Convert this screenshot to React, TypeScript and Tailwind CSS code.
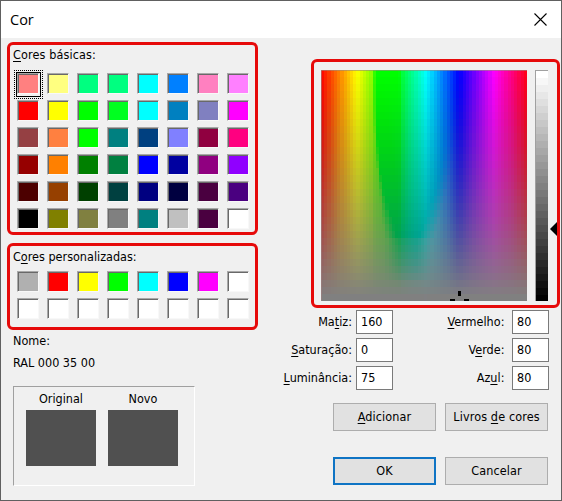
import type { ReactNode } from "react";

const BASIC_COLORS = [
  ["#ff8080", "#ffff80", "#00ff80", "#00ff80", "#00ffff", "#0080ff", "#ff80c0", "#ff80ff"],
  ["#ff0000", "#ffff00", "#00ff00", "#00ff20", "#00ffff", "#0080c0", "#8080c0", "#ff00ff"],
  ["#954043", "#ff8040", "#00ff00", "#008080", "#004080", "#8080ff", "#900040", "#ff0080"],
  ["#960000", "#ff8000", "#008000", "#008040", "#0000ff", "#0000a0", "#900080", "#9000ff"],
  ["#4c0000", "#964000", "#004000", "#004040", "#000080", "#000040", "#4a0040", "#4a0080"],
  ["#000000", "#808000", "#808040", "#808080", "#008080", "#c0c0c0", "#4a0040", "#ffffff"],
];

const CUSTOM_COLORS = [
  ["#b0b0b0", "#ff0000", "#ffff00", "#00ff00", "#00ffff", "#0000ff", "#ff00ff", "#ffffff"],
  ["#ffffff", "#ffffff", "#ffffff", "#ffffff", "#ffffff", "#ffffff", "#ffffff", "#ffffff"],
];

// position along the hue axis -> r, g, b at full saturation
const HUE_STOPS = [
  [0, 255, 0, 0],
  [0.175, 255, 255, 0],
  [0.25, 128, 255, 0],
  [0.26, 90, 255, 0],
  [0.38, 0, 255, 0],
  [0.4, 0, 255, 70],
  [0.51, 0, 255, 255],
  [0.67, 0, 0, 255],
  [0.84, 255, 0, 255],
  [1, 255, 0, 20],
];

const COLS = 64;
const ROWS = 33;

const clamp = (v: number) => Math.max(0, Math.min(1, v));

function hueAt(x: number) {
  let i = 1;
  while (i < HUE_STOPS.length - 1 && HUE_STOPS[i][0] < x) i++;
  const a = HUE_STOPS[i - 1];
  const b = HUE_STOPS[i];
  const t = (x - a[0]) / (b[0] - a[0]);
  return [1, 2, 3].map((c) => a[c] + (b[c] - a[c]) * t);
}

function spectrumColor(x: number, y: number) {
  const slow = Math.pow(y, 1.6);
  const hue = hueAt(x);
  let [r, g, b] = hue.map((c) => c + (128 - c) * (c > 128 ? y : slow));
  // greens and cyans keep no red until close to the grey end
  const left = 0.25 + 0.09 * Math.pow(Math.min(1, y / 0.75), 2.5);
  const right = 0.67 - 0.13 * Math.pow(Math.min(1, y / 0.75), 2);
  const soft = clamp((y - 0.5) / 0.3) * 0.03;
  const inside = clamp((x - left + soft) / (0.015 + soft * 2)) * clamp((right - x) / (0.05 + soft));
  const strength = y < 0.74 ? 1 : 0.7 * (1 - clamp((y - 0.74) / 0.2));
  r *= 1 - inside * strength;
  // blue leaks into the pure greens further down
  if (x > 0.25 && x < 0.51) {
    const leak = Math.min(130, (x - 0.25) * 520 * Math.min(1, y * 1.4));
    b = Math.max(b, leak);
  }
  return `rgb(${Math.round(r)},${Math.round(g)},${Math.round(b)})`;
}

function Spectrum() {
  const cells = [];
  for (let row = 0; row < ROWS; row++) {
    for (let col = 0; col < COLS; col++) {
      cells.push(
        <rect
          key={`${row}-${col}`}
          x={(col * 206) / COLS}
          y={row * 7}
          width={206 / COLS + 0.5}
          height={7}
          fill={spectrumColor((col + 0.5) / COLS, row / (ROWS - 1))}
        />
      );
    }
  }
  return (
    <svg width={206} height={231} viewBox="0 0 206 231" shapeRendering="crispEdges">
      {cells}
      <rect x={0} y={0} width={206} height={1} fill="#9a8a80" fillOpacity={0.6} />
      <rect x={0} y={0} width={1} height={231} fill="#a08080" fillOpacity={0.6} />
      <path d="M137 221h3v5h-3zM129 229h5v2h-5zM143 229h5v2h-5z" fill="#000" />
    </svg>
  );
}

function LuminanceBar() {
  return (
    <div className="h-[231px] w-[13px] overflow-hidden border-t border-l border-[#a0a0a0]">
      {Array.from({ length: ROWS }, (_, i) => {
        const v = Math.round(255 - (i * 255) / (ROWS - 1));
        return <div key={i} className="h-[7px]" style={{ background: `rgb(${v},${v},${v})` }} />;
      })}
    </div>
  );
}

function Swatch({ color, selected }: { color: string; selected?: boolean }) {
  return (
    <div className="relative h-[21px] w-[22px] border border-t-[#a8a8a8] border-r-[#f8f8f8] border-b-[#f8f8f8] border-l-[#a8a8a8]">
      <div
        className="h-full w-full border-t border-l border-[#696969]"
        style={{ background: color }}
      />
      {selected && (
        <>
          <div className="absolute -top-[2px] -left-[2px] h-[25px] w-[25px] border border-black" />
          <div className="absolute -top-[4px] -left-[4px] h-[29px] w-[29px] border border-dotted border-black" />
        </>
      )}
    </div>
  );
}

function SwatchGrid({ colors, selectFirst }: { colors: string[][]; selectFirst?: boolean }) {
  return (
    <div className="grid grid-cols-[repeat(8,22px)] gap-x-2 gap-y-1.5 pl-1">
      {colors.flat().map((color, i) => (
        <Swatch key={i} color={color} selected={selectFirst && i === 0} />
      ))}
    </div>
  );
}

function Field({ label, value }: { label: ReactNode; value: string }) {
  return (
    <div className="flex h-6 items-center justify-end gap-1">
      <span>{label}</span>
      <div className="h-6 w-[37px] border border-[#7a7a7a] bg-white pl-1 leading-[21px]">
        {value}
      </div>
    </div>
  );
}

function Button({ children, primary }: { children: ReactNode; primary?: boolean }) {
  return (
    <button
      className={`h-7 w-[103px] bg-[#e1e1e1] text-center tracking-[0.01em] ${
        primary ? "border-2 border-[#0f74c4]" : "border border-[#adadad]"
      }`}
    >
      {children}
    </button>
  );
}

function Preview({ label }: { label: string }) {
  return (
    <div className="w-[70px] text-center">
      <div className="h-[18px] leading-[14px]">{label}</div>
      <div className="h-14 bg-[#505050]" />
    </div>
  );
}

export default function App() {
  return (
    <div className="h-[501px] w-[562px] overflow-hidden border border-[#606060] bg-[#f0f0f0] font-['DejaVu_Sans_Condensed','DejaVu_Sans',sans-serif] text-[12.5px] leading-4 text-black [&_u]:underline-offset-2">
      <header className="flex h-[37px] items-center justify-between bg-white pr-3.5 pl-[9px]">
        <span className="font-['Open_Sans',sans-serif] text-[14.5px]">Cor</span>
        <svg width={13} height={13} viewBox="0 0 13 13" stroke="#000" strokeWidth={1.1}>
          <path d="M.5.5l12 12M12.5.5l-12 12" />
        </svg>
      </header>

      <main className="flex justify-between pr-px pl-[6px]">
        <section className="w-[251px] pt-1">
          <div className="h-[193px] rounded-md border-[3px] border-[#e60a0a] pt-[2px] pl-[3px]">
            <div className="mb-[10px] h-4 tracking-[0.01em]">
              <u>C</u>ores básicas:
            </div>
            <SwatchGrid colors={BASIC_COLORS} selectFirst />
          </div>

          <div className="mt-2 h-[87px] rounded-md border-[3px] border-[#e60a0a] pt-[3px] pl-[3px]">
            <div className="mb-[6px] h-4">
              C<u>o</u>res personalizadas:
            </div>
            <SwatchGrid colors={CUSTOM_COLORS} />
          </div>

          <div className="pt-[3px] pl-[6px]">
            <div>Nome:</div>
            <div className="mt-1.5">RAL 000 35 00</div>
            <div className="mt-[15px] flex h-[100px] w-[182px] gap-3 border border-t-[#a0a0a0] border-r-white border-b-white border-l-[#a0a0a0] pt-[5px] pl-3">
              <Preview label="Original" />
              <Preview label="Novo" />
            </div>
          </div>
        </section>

        <section className="w-[249px] pt-[21px]">
          <div className="relative flex h-[249px] gap-[8px] rounded-md border-[3px] border-[#e60a0a] pt-2 pl-[7px]">
            <Spectrum />
            <LuminanceBar />
            <svg className="absolute top-[160px] right-0" width={7} height={14} viewBox="0 0 7 14">
              <path d="M7 0v14L0 7z" fill="#000" />
            </svg>
          </div>

          <div className="-ml-10 mt-[2px] flex justify-between pr-[11px]">
            <div className="flex w-[122px] flex-col gap-1">
              <Field label={<>Ma<u>t</u>iz:</>} value="160" />
              <Field label={<><u>S</u>aturação:</>} value="0" />
              <Field label={<><u>L</u>uminância:</>} value="75" />
            </div>
            <div className="flex flex-col gap-1">
              <Field label={<><u>V</u>ermelho:&nbsp;</>} value="80" />
              <Field label={<>V<u>e</u>rde:&nbsp;</>} value="80" />
              <Field label={<>Az<u>u</u>l:&nbsp;</>} value="80" />
            </div>
          </div>

          <div className="mt-[13px] grid grid-cols-[103px_103px] gap-x-[9px] gap-y-[26px] pl-[22px]">
            <Button><u>A</u>dicionar</Button>
            <Button>Livros <u>d</u>e cores</Button>
            <Button primary>OK</Button>
            <Button>Cancelar</Button>
          </div>
        </section>
      </main>
    </div>
  );
}
